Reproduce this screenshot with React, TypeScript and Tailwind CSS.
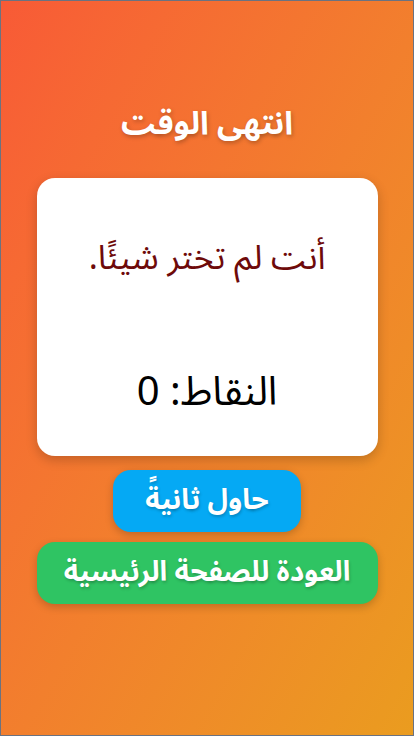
export default function App() {
  return (
    <div
      dir="rtl"
      className="h-[736px] w-[414px] overflow-hidden border border-[#6b7280] bg-gradient-to-br from-[#f85a36] to-[#ea9c1f]"
      style={{ fontFamily: '"Noto Sans Arabic", "Noto Sans Arabic UI", "Noto Sans", sans-serif' }}
    >
      <div className="flex flex-col items-center pt-[99px]">
        <h1 className="text-[32px] font-bold leading-[48px] text-white [text-shadow:1px_2px_4px_rgba(0,0,0,0.25)]">
          انتهى الوقت
        </h1>

        {/* Card */}
        <div className="mt-[30px] flex h-[278px] w-[341px] flex-col items-center rounded-[18px] bg-white shadow-[0_4px_12px_rgba(0,0,0,0.2)]">
          <p className="mt-[54px] text-[34px] leading-[52px] text-[#6e0a0a]">أنت لم تختر شيئًا.</p>
          <p className="mt-[81px] text-[40px] leading-[56px] text-black">النقاط: 0</p>
        </div>

        <button className="mt-[14px] h-[62px] w-[188px] rounded-[18px] bg-[#05a9f4] text-[28px] font-bold text-white shadow-[0_3px_8px_rgba(0,0,0,0.2)] [text-shadow:1px_2px_3px_rgba(0,0,0,0.2)]">
          حاول ثانيةً
        </button>
        <button className="mt-[10px] h-[62px] w-[341px] rounded-[18px] bg-[#2fc463] text-[28px] font-bold text-white shadow-[0_3px_8px_rgba(0,0,0,0.2)] [text-shadow:1px_2px_3px_rgba(0,0,0,0.2)]">
          العودة للصفحة الرئيسية
        </button>
      </div>
    </div>
  )
}
